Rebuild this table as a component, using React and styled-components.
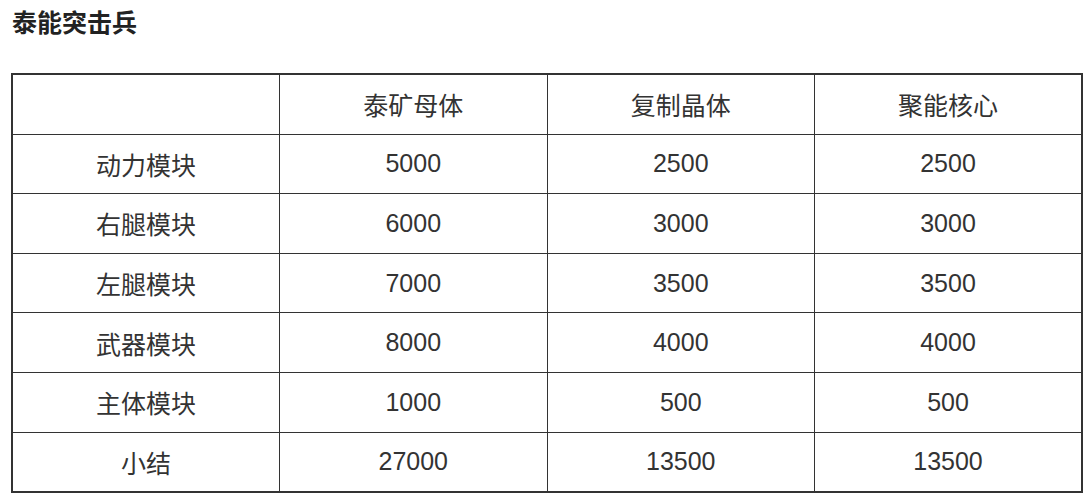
import React from 'react';
import styled, { createGlobalStyle } from 'styled-components';

const GlobalStyle = createGlobalStyle`
  body {
    margin: 0;
    background: #ffffff;
    font-family: "Liberation Sans", "Noto Sans CJK SC", sans-serif;
  }
`;

const Page = styled.div`
  padding: 8px 7px 8px 11px;
`;

const Title = styled.h1`
  margin: 0 0 34px 1px;
  font-size: 25px;
  line-height: 31px;
  font-weight: 700;
  color: #222;
`;

const Table = styled.table`
  width: 1072px;
  table-layout: fixed;
  border-collapse: collapse;
  border: 2px solid #333;
`;

const Cell = styled.td`
  height: 58.6px;
  padding: 0;
  border: 1.5px solid #333;
  text-align: center;
  vertical-align: middle;
  font-size: 25px;
  color: #333;
`;

const header = ['', '泰矿母体', '复制晶体', '聚能核心'];

const rows = [
  ['动力模块', 5000, 2500, 2500],
  ['右腿模块', 6000, 3000, 3000],
  ['左腿模块', 7000, 3500, 3500],
  ['武器模块', 8000, 4000, 4000],
  ['主体模块', 1000, 500, 500],
];

export default function App() {
  const total = [1, 2, 3].map(i => rows.reduce((s, r) => s + r[i], 0));

  return (
    <Page>
      <GlobalStyle />
      <Title>泰能突击兵</Title>
      <Table>
        <tbody>
          <tr>
            {header.map((h, i) => <Cell key={i}>{h}</Cell>)}
          </tr>
          {rows.map(r => (
            <tr key={r[0]}>
              {r.map((v, i) => <Cell key={i}>{v}</Cell>)}
            </tr>
          ))}
          <tr>
            <Cell>小结</Cell>
            {total.map((v, i) => <Cell key={i}>{v}</Cell>)}
          </tr>
        </tbody>
      </Table>
    </Page>
  );
}
